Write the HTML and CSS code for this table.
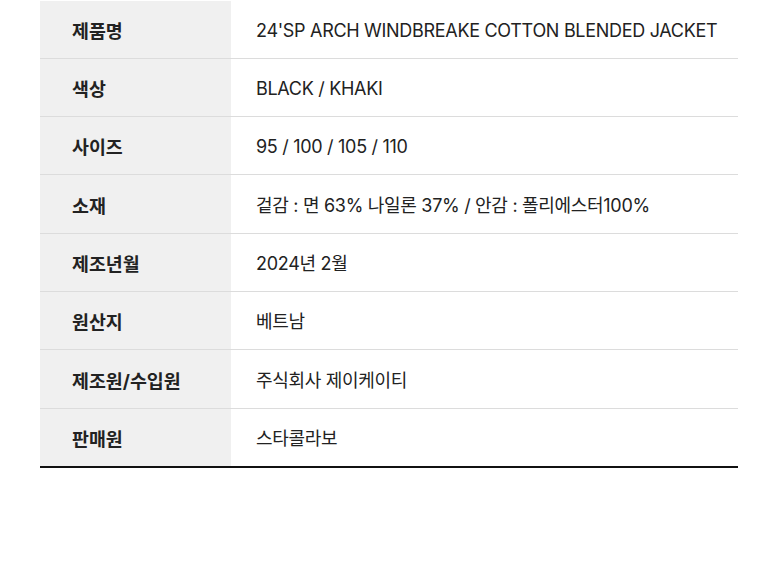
FILE: index.html
```html
<!DOCTYPE html>
<html lang="ko">
<head>
<meta charset="utf-8">
<link rel="stylesheet" href="styles.css">
</head>
<body>
<table class="spec">
  <tbody>
    <tr><th>제품명</th><td>24'SP ARCH WINDBREAKE COTTON BLENDED JACKET</td></tr>
    <tr><th>색상</th><td>BLACK / KHAKI</td></tr>
    <tr><th>사이즈</th><td>95 / 100 / 105 / 110</td></tr>
    <tr><th>소재</th><td>겉감 : 면 63% 나일론 37% / 안감 : 폴리에스터100%</td></tr>
    <tr><th>제조년월</th><td>2024년 2월</td></tr>
    <tr><th>원산지</th><td>베트남</td></tr>
    <tr><th>제조원/수입원</th><td>주식회사 제이케이티</td></tr>
    <tr><th>판매원</th><td>스타콜라보</td></tr>
  </tbody>
</table>
</body>
</html>
```
FILE: styles.css
```css
html, body {
  margin: 0;
  padding: 0;
  background: #fff;
}
body {
  padding-top: 0.6px;
  font-family: Inter, "Noto Sans CJK KR", sans-serif;
  color: #222;
}
.spec {
  margin-left: 40px;
  width: 698px;
  border-collapse: collapse;
  border-bottom: 2px solid #111;
}
.spec th, .spec td {
  height: 54.3px;
  padding: 3px 0 0 0;
  line-height: 22px;
  vertical-align: middle;
  border-bottom: 1px solid #dcdcdc;
  font-size: 18px;
  letter-spacing: -0.3px;
}
.spec tr:last-child th, .spec tr:last-child td {
  border-bottom: none;
}
.spec th {
  width: 159px;
  background: #f0f0f0;
  text-align: left;
  padding-left: 32px;
  font-weight: 700;
  font-size: 18.4px;
  letter-spacing: 0;
  color: #222;
}
.spec td {
  padding-left: 25px;
  font-weight: 400;
  color: #222;
}
```
